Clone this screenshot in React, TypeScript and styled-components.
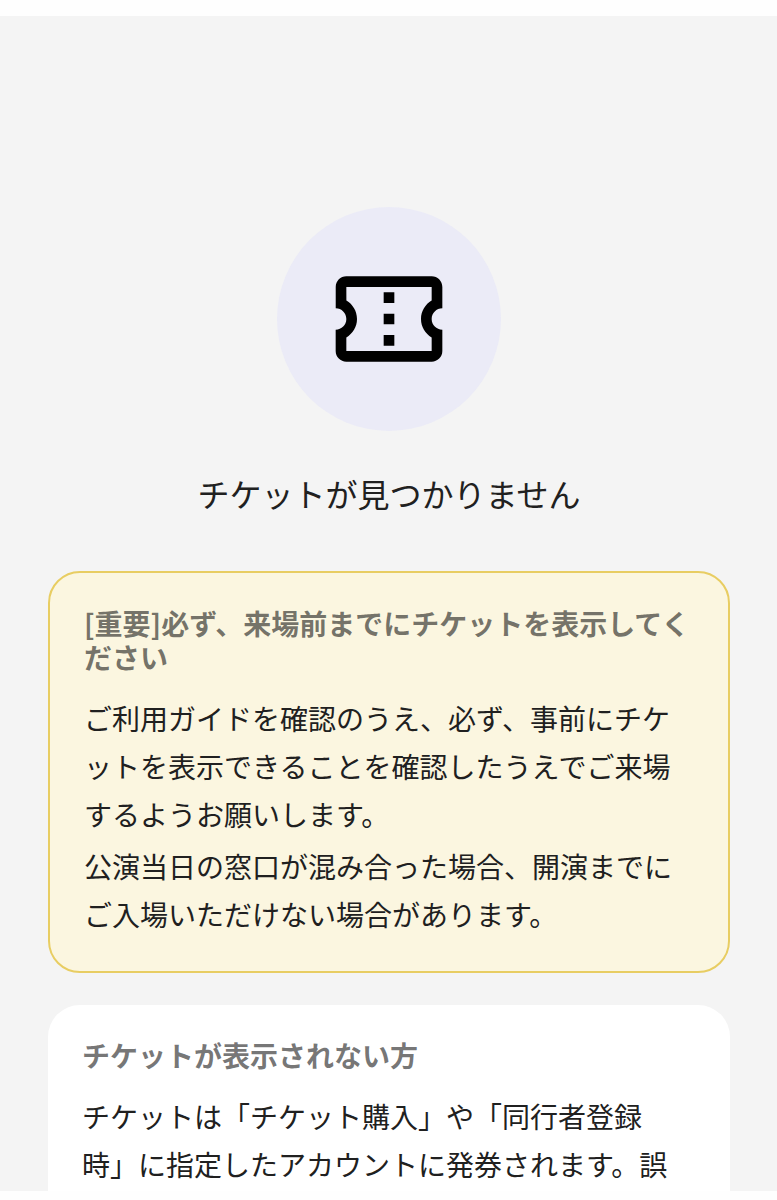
import React from "react";
import styled, { createGlobalStyle } from "styled-components";

const GlobalStyle = createGlobalStyle`
  *, *::before, *::after { box-sizing: border-box; }
  body {
    margin: 0;
    background: #ffffff;
    color: #202020;
    font-family: "Noto Sans CJK JP", sans-serif;
    text-spacing-trim: space-all;
  }
`;

const Screen = styled.div`
  display: flex;
  flex-direction: column;
  height: 100vh;
  overflow: hidden;
`;

const EdgeBar = styled.div<{ $size: number }>`
  flex: none;
  height: ${(p) => p.$size}px;
  background: #fefefe;
`;

const Content = styled.main`
  flex: 1;
  min-height: 0;
  overflow: hidden;
  display: flex;
  flex-direction: column;
  padding: 191px 47px 0 48px;
  background: #f4f4f4;
`;

const EmptyState = styled.section`
  flex: none;
  display: flex;
  flex-direction: column;
  align-items: center;
  gap: 38px;
  margin-bottom: 54px;
`;

const IconCircle = styled.div`
  display: grid;
  place-items: center;
  width: 224px;
  height: 224px;
  border-radius: 50%;
  background: #ebebf7;
`;

const Title = styled.h1`
  margin: 0;
  font-size: 32px;
  line-height: 48px;
  font-weight: 400;
`;

const Cards = styled.div`
  flex: none;
  display: flex;
  flex-direction: column;
  gap: 32px;
`;

const Card = styled.section<{ $important?: boolean }>`
  padding: 33px 34px;
  border-radius: 32px;
  background: ${(p) => (p.$important ? "#fbf6e0" : "#ffffff")};
  border: ${(p) => (p.$important ? "2px solid #e8cd62" : "none")};
`;

const CardHeading = styled.h2`
  margin: 0 0 20px;
  color: rgba(0, 0, 0, 0.55);
  font-size: 28px;
  line-height: 34px;
  font-weight: 700;
  line-break: loose;
`;

const CardText = styled.p`
  margin: 0;
  font-size: 28px;
  line-height: 48px;
  line-break: normal;

  & + & {
    margin-top: 4px;
  }
`;

const TicketIcon = () => (
  <svg width="128" height="128" viewBox="0 0 24 24" fill="#000000" aria-hidden="true">
    <path d="M22 10V6c0-1.11-.9-2-2-2H4c-1.1 0-1.99.89-1.99 2v4c1.1 0 1.99.9 1.99 2s-.89 2-2 2v4c0 1.1.9 2 2 2h16c1.1 0 2-.9 2-2v-4c-1.1 0-2-.9-2-2s.9-2 2-2zm-2-1.46c-1.19.69-2 1.99-2 3.46s.81 2.77 2 3.46V18H4v-2.54c1.19-.69 2-1.99 2-3.46 0-1.48-.8-2.77-1.99-3.46L4 6h16v2.54zM11 15h2v2h-2zm0-4h2v2h-2zm0-4h2v2h-2z" />
  </svg>
);

export default function App() {
  return (
    <>
      <GlobalStyle />
      <Screen lang="ja">
        <EdgeBar $size={16} />
        <Content>
          <EmptyState>
            <IconCircle>
              <TicketIcon />
            </IconCircle>
            <Title>チケットが見つかりません</Title>
          </EmptyState>
          <Cards>
            <Card $important>
              <CardHeading>[重要]必ず、来場前までにチケットを表示してください</CardHeading>
              <CardText>
                ご利用ガイドを確認のうえ、必ず、事前にチケットを表示できることを確認したうえでご来場するようお願いします。
              </CardText>
              <CardText>
                公演当日の窓口が混み合った場合、開演までにご入場いただけない場合があります。
              </CardText>
            </Card>
            <Card>
              <CardHeading>チケットが表示されない方</CardHeading>
              <CardText>
                チケットは「チケット購入」や「同行者登録時」に指定したアカウントに発券されます。誤
              </CardText>
            </Card>
          </Cards>
        </Content>
        <EdgeBar $size={9} />
      </Screen>
    </>
  );
}
